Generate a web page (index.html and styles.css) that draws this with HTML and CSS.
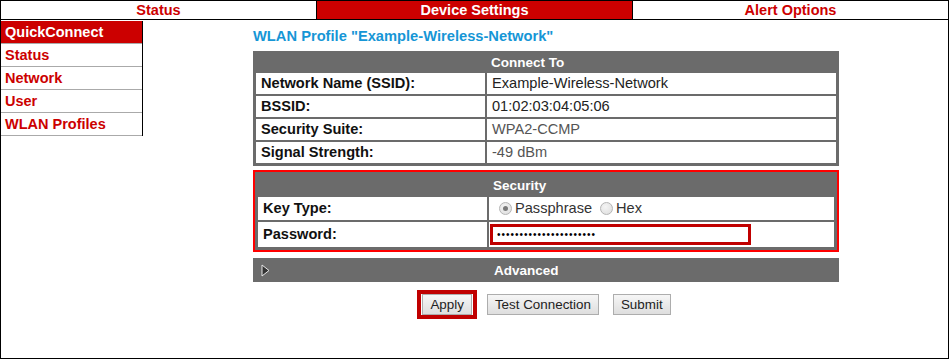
FILE: index.html
```html
<!DOCTYPE html>
<html>
<head>
    <meta charset="utf-8">
    <meta name="viewport" content="width=device-width, initial-scale=1">
    <link rel="stylesheet" href="styles.css">
    <title>WLAN Profile</title>
</head>
<body>
<div class="page">
    <div class="tabs">
        <div class="tab">Status</div>
        <div class="tab active">Device Settings</div>
        <div class="tab">Alert Options</div>
    </div>
    <div class="main">
        <div class="menu">
            <div class="item current">QuickConnect</div>
            <div class="item">Status</div>
            <div class="item">Network</div>
            <div class="item">User</div>
            <div class="item">WLAN Profiles</div>
        </div>
        <div class="content">
            <h1>WLAN Profile "Example-Wireless-Network"</h1>
            <table class="grid">
                <tr class="head"><th class="lbl"></th><th>Connect To</th></tr>
                <tr><td class="lbl">Network Name (SSID):</td><td class="val">Example-Wireless-Network</td></tr>
                <tr><td class="lbl">BSSID:</td><td class="val">01:02:03:04:05:06</td></tr>
                <tr><td class="lbl">Security Suite:</td><td class="val dim">WPA2-CCMP</td></tr>
                <tr><td class="lbl">Signal Strength:</td><td class="val dim">-49 dBm</td></tr>
            </table>
            <div class="mark">
                <table class="grid sec">
                    <tr class="head"><th class="lbl"></th><th>Security</th></tr>
                    <tr class="keyrow">
                        <td class="lbl">Key Type:</td>
                        <td class="val">
                            <span class="radio on"></span>Passphrase<span class="radio second"></span>Hex
                        </td>
                    </tr>
                    <tr class="pwrow">
                        <td class="lbl">Password:</td>
                        <td class="val"><input class="pw" type="password" value="abcdefghijklmnopqrstuv"></td>
                    </tr>
                </table>
            </div>
            <div class="advanced">
                <svg width="9" height="13" viewBox="0 0 9 13"><polygon points="1,1 8,6.5 1,12" fill="#333" stroke="#e6e6e6" stroke-width="1"/></svg>
                <span>Advanced</span>
            </div>
            <div class="buttons">
                <div class="hl"><button>Apply</button></div>
                <button>Test Connection</button>
                <button>Submit</button>
            </div>
        </div>
    </div>
</div>
</body>
</html>
```

FILE: styles.css
```css
body{
    margin: 0;
    font-family: "Liberation Sans", Arial, sans-serif;
}

.page{
    height: 359px;
    box-sizing: border-box;
    border: 1px solid #000;
}

/* top tabs */
.tabs{
    display: flex;
    height: 18px;
    border-bottom: 1px solid #000;
}
.tab{
    flex: 1;
    text-align: center;
    font-weight: bold;
    font-size: 14.5px;
    line-height: 18px;
    color: #cc0000;
}
.tab + .tab{
    border-left: 1px solid #000;
}
.tab.active{
    background: #cc0000;
    color: #fff;
}

.main{
    display: flex;
}

/* left menu */
.menu{
    width: 141px;
    margin-top: 1px;
    border-right: 1px solid #000;
    align-self: flex-start;
}
.item{
    height: 22px;
    line-height: 22px;
    border-bottom: 1px solid #aaa;
    padding-left: 4px;
    font-weight: bold;
    font-size: 14.5px;
    color: #cc0000;
}
.item.current{
    background: #cc0000;
    color: #fff;
}

/* content */
.content{
    width: 586px;
    margin: 0 auto;
    padding-left: 1px;
}
h1{
    font-size: 14.7px;
    color: #1696d6;
    margin: 8px 0 7px;
    line-height: 16px;
}

.grid{
    width: 586px;
    border-collapse: separate;
    border-spacing: 2px;
    border: 1px solid #6b6b6b;
    background: #6b6b6b;
    font-size: 14.6px;
}
.grid th{
    color: #fff;
    font-size: 13.5px;
    text-align: left;
    padding: 1px 0 0 4px;
    height: 16px;
    line-height: 16px;
}
.grid td{
    background: #fff;
    height: 21px;
    line-height: 21px;
    padding: 0;
}
.lbl{
    width: 224px;
    font-weight: bold;
    padding-left: 5px !important;
    color: #111;
}
.val{
    padding-left: 5px !important;
    color: #222;
}
.dim{
    color: #555;
}

/* red highlight around the security block */
.mark{
    margin-top: 4px;
    border: 2px solid #ff0000;
}
.sec{
    width: 582px;
}
.sec th{
    height: 19px;
    line-height: 19px;
    padding-top: 1px;
}
.sec .keyrow td{
    height: 23px;
}
.sec .keyrow .val{
    color: #333;
}
.sec .pwrow td{
    height: 25px;
}
.sec .pwrow .val{
    padding-left: 1px !important;
}
.radio{
    display: inline-block;
    width: 13px;
    height: 13px;
    border: 1px solid #b5b5b5;
    border-radius: 50%;
    background: radial-gradient(circle at 40% 35%, #f4f4f4, #dcdcdc);
    vertical-align: -2px;
    margin: 0 3px 0 5px;
    box-sizing: border-box;
    position: relative;
}
.radio.on::after{
    content: "";
    position: absolute;
    left: 3px;
    top: 3px;
    width: 5px;
    height: 5px;
    border-radius: 50%;
    background: #7a7a7a;
}
.radio.second{
    margin-left: 8px;
}
.pw{
    display: block;
    width: 261px;
    height: 21px;
    box-sizing: border-box;
    border: 3px solid #c00000;
    padding: 0 0 0 4px;
    font-size: 10px;
    letter-spacing: 1px;
    color: #000;
    outline: none;
}

.advanced{
    margin-top: 6px;
    height: 24px;
    background: #6b6b6b;
    display: flex;
    align-items: center;
    color: #fff;
    font-weight: bold;
    font-size: 13.5px;
}
.advanced svg{
    margin-left: 8px;
}
.advanced span{
    margin-left: 224px;
}

.buttons{
    display: flex;
    justify-content: center;
    align-items: flex-start;
    gap: 14px;
    margin-top: 8px;
    padding-right: 4px;
}
.buttons button{
    height: 21px;
    margin-top: 4px;
    padding: 0 7px;
    font-family: "Liberation Sans", Arial, sans-serif;
    font-size: 13.4px;
    color: #222;
    border: 1px solid #adadad;
    border-radius: 0;
    background: linear-gradient(#f6f6f6, #dedede);
}
.hl{
    border: 4px solid #c00000;
    padding: 0 1px;
    margin-right: -4px;
}
.hl button{
    margin-top: 0;
}
```
